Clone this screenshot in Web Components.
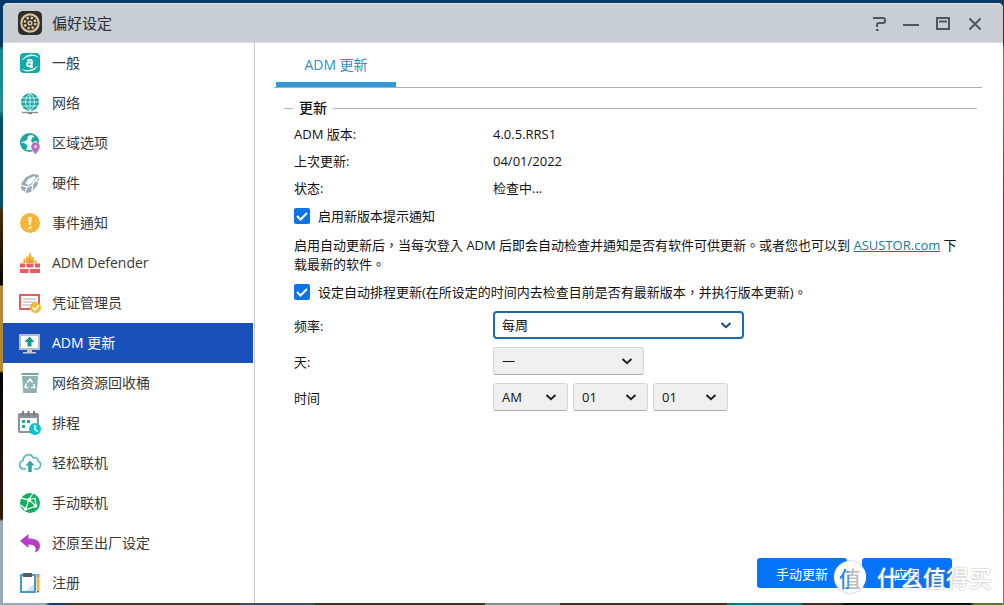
<!DOCTYPE html>
<html lang="zh-Hant">
<head>
<meta charset="utf-8">
<title>偏好设定</title>
<style>
html, body { height: 100%; }
body { margin: 0; font-family: "Open Sans", "Noto Sans CJK TC", sans-serif; font-size: 13px; color: #111; overflow: hidden; }
</style>
</head>
<body>
<desktop-screen>
  <app-window heading="偏好设定">
    <nav-list slot="side">
      <nav-item icon="general">一般</nav-item>
      <nav-item icon="network">网络</nav-item>
      <nav-item icon="region">区域选项</nav-item>
      <nav-item icon="hardware">硬件</nav-item>
      <nav-item icon="notice">事件通知</nav-item>
      <nav-item icon="defender">ADM Defender</nav-item>
      <nav-item icon="cert">凭证管理员</nav-item>
      <nav-item icon="update" selected>ADM 更新</nav-item>
      <nav-item icon="trash">网络资源回收桶</nav-item>
      <nav-item icon="schedule">排程</nav-item>
      <nav-item icon="cloud">轻松联机</nav-item>
      <nav-item icon="manual">手动联机</nav-item>
      <nav-item icon="reset">还原至出厂设定</nav-item>
      <nav-item icon="register">注册</nav-item>
    </nav-list>
    <update-panel></update-panel>
  </app-window>
  <brand-mark slot="overlay"></brand-mark>
</desktop-screen>

<script>
const define = (name, html, setup) => {
  const t = document.createElement('template');
  t.innerHTML = html;
  customElements.define(name, class extends HTMLElement {
    constructor() {
      super();
      this.attachShadow({ mode: 'open' }).append(t.content.cloneNode(true));
    }
    connectedCallback() { if (setup) setup(this, this.shadowRoot); }
  });
};

const svg = (body, size = 24) => `<svg width="${size}" height="${size}" viewBox="0 0 24 24" fill="none" aria-hidden="true">${body}</svg>`;

const icons = {
  general: `<rect x="2" y="2" width="20" height="20" rx="4" fill="#14aaa9"/>
    <path d="M4 9.500C7 3 16 1.500 21 6.500C16 3.800 9 4.500 4 9.500zM20 14.500C17 21 8 22.500 3 17.500C8 20.200 15 19.500 20 14.500z" fill="#fff"/>
    <ellipse cx="11.300" cy="13.300" rx="2.300" ry="2" stroke="#fff" stroke-width="1.700"/><path d="M9 9.700q5.500-2 5 1.300l-.8 5h1.800" stroke="#fff" stroke-width="1.800"/>`,
  network: `<circle cx="12" cy="11" r="9" fill="#1aa5a3"/><path d="M4 7h16M3 11h18M4 15h16M12 2v18M12 2c-6 5-6 13 0 18M12 2c6 5 6 13 0 18" stroke="#c8f3ee" stroke-width="1"/><path d="M4 21.500h16" stroke="#8b8f95" stroke-width="1.500"/><path d="M10 22.500h4" stroke="#666b70"/>`,
  region: `<circle cx="11.500" cy="11.500" r="8.700" fill="#f2fffd" stroke="#1aa79d" stroke-width="1.800"/><path d="M3 12l3 0 3 2 0 3-2 2-3-3zM4 7l5-4 3 0-1 2-2 1 1 2-3 2-3 1zM15 3l5 4 1 4-4-1-2 2-2-2 1-3 2-1z" fill="#1aa79d"/><path d="M17.500 24c-1.500-3-4.500-5-4.500-8.500a4.500 4.500 0 0 1 9 0c0 3.500-3 5.500-4.500 8.500z" fill="#b46dc2" stroke="#fff" stroke-width=".5"/><circle cx="17.500" cy="15.500" r="1.600" fill="#e7c9ec"/>`,
  hardware: `<path d="M3 13l5-7 7-3 5.500 1 .5 4-2 7-6 6-5 1-5-4z" fill="#98a9b9"/><path d="M7.500 12.500l2.500-4.500 6.500-3 1.500 2-3.500 4.500-4 2.500z" fill="#fff"/><path d="M2.500 14l6 2 5.500-2 6.500-8M9 16l-2 5.500M14.500 14l-.5 6.500M18.500 9.500l2 2" stroke="#fff" stroke-width="1.200"/>`,
  notice: `<circle cx="12" cy="12" r="10" fill="#f5b638"/><path d="M10.300 6h3.400l-.6 8h-2.200z" fill="#fff4d8"/><circle cx="12" cy="16.800" r="1.500" fill="#fff4d8"/>`,
  defender: `<path d="M5 12l1-5 2 2 0-4 2 1 2-5 2 5 2 0 0 4 2-1 1 3z" fill="#f4b43f"/><path d="M9 12l3-5 3 5z" fill="#ee9a3c"/><path d="M2 12.500h5v4H2zM8.500 12.500h7v4h-7zM17 12.500h5v4h-5zM2 18h8.500v4H2zM12 18h10v4H12z" fill="#ea5a5e"/>`,
  cert: `<rect x="2" y="4" width="19" height="14" fill="#fff" stroke="#e05f5e" stroke-width="2"/><path d="M5 8h13M5 11h13M5 14h9" stroke="#c9c4d4" stroke-width="1.400"/><circle cx="17.500" cy="16.500" r="5.500" fill="#f2bb36"/><path d="M14.500 16.500l2.300 2.500 4-4.500" stroke="#fff" stroke-width="1.700"/>`,
  update: `<path d="M1 3h21v16H1z" fill="#b9bcc4"/><path d="M3 5h17v12H3z" fill="#fff"/><path d="M11.500 5.500l5 5.500h-3v4.500h-4V11h-3z" fill="#159b8c"/><path d="M9 19h5v2h4v1.500H5V21h4z" fill="#c6c9cd"/>`,
  trash: `<path d="M3.500 2h17v2h-17z" fill="#77a5a2"/><path d="M4 5h16l-1.200 17H5.200z" fill="#8fb3b2"/><path d="M9.500 11.500L12 7.800l2.500 3.700M15.500 13l1.500 3.500h-4M8.500 12.500L7 16.500h3.500" stroke="#fff" stroke-width="1.500" stroke-linejoin="round"/>`,
  schedule: `<rect x="1" y="3" width="19" height="18" rx="1" fill="#fff" stroke="#8d9096" stroke-width="2"/><path d="M0 3h21v4H0z" fill="#8d9096"/><path d="M5 0v5M10.500 0v5M16 0v5" stroke="#787d84" stroke-width="2"/><path d="M4 9h3v3H4zM9 9h3v3H9zM4 14h3v3H4z" fill="#27a69e"/><circle cx="17" cy="18" r="6" fill="#12bfd3"/><path d="M17 14v4.500l3 2" stroke="#fff" stroke-width="1.500"/>`,
  cloud: `<path d="M8 18H5.500a4.300 4.300 0 0 1-.3-8.500C5 4 12.500 1 15.500 7c4-1 5 2 4.500 3 4 1.500 3 8-1.500 8H16" stroke="#58b5b7" stroke-width="1.600"/><path d="M12 9.500l4.500 5h-2.700V21h-3.600v-6.500H7.500z" fill="#2fa7a9"/>`,
  manual: `<circle cx="12" cy="12" r="10" fill="#12ad5d"/><path d="M3 7l8 2 7 6M11 9L7 19M11 9l4-7M17 7l-6 2M17 7l1 8-11 4M3 14l5 5" stroke="#eafff2" stroke-width="1.300"/><circle cx="11" cy="9" r="2" fill="#fff"/><circle cx="17.500" cy="15" r="1.800" fill="#fff"/><circle cx="7.500" cy="18" r="1.800" fill="#fff"/>`,
  reset: `<path d="M2 10L10.500 3v4.500c7 0 11.500 2 11.500 7.500 0 3-2 5.500-5 6.500 2.500-5-.5-8-6.500-8V17z" fill="#ba3ec8"/><path d="M16 10c5 2 5 8 1 11.500 2-4 1-6-1-7.500z" fill="#8e4a9a" opacity=".5"/>`,
  register: `<rect x="3" y="4" width="14" height="17" fill="#fff" stroke="#3f9bd0" stroke-width="2"/><path d="M5 2h9v4H5z" fill="#4e6063"/><path d="M16 13v7h-8z" fill="#cfe3ef"/><path d="M18.500 6h3v13L20 22l-1.500-3z" fill="#f1b740"/><path d="M18.500 3h3v3h-3z" fill="#c9898d"/><path d="M19 20l1 2 1-2z" fill="#333"/>`
};

define('desktop-screen', `
<style>
:host { display: flex; box-sizing: border-box; min-height: 100vh; height: 100%; padding: 3px 1px 2px 3px; position: relative;
  background:
    linear-gradient(#063a66, #063a66) top / 100% 3px no-repeat,
    linear-gradient(#0a3c66 46px, #577d3e 46px, #8a7f8c 70px, #4a7d2c 130px, #175a5c 200px, #175a5c 270px, #355c33 60%, #7d8f2c) right / 2px 100% no-repeat,
    linear-gradient(90deg, #9aa8b8 45px, #1d3a63 50px 62px, #4a3222 72px 240px, #4a4a66 240px 315px, #45301f 315px 485px, #8b8b8b 485px 560px, #432e20 560px 727px, #08757a 727px 802px, #40301e 802px 840px, #0d0c08 845px 970px, #5f7234 974px) bottom / 100% 2px no-repeat,
    linear-gradient(#063a66 46px, #1b8590 50px, #2a8b95 110px, #085064 118px, #05506b 205px, #4a2b08 212px, #0a0500 285px, #b28a38 286px, #b28a38 371px, #050302 373px, #35190d 519px, #9aa8b8 521px); }
::slotted(app-window) { flex: 1; min-width: 0; }
</style>
<slot></slot><slot name="overlay"></slot>`);

define('app-window', `
<style>
:host { display: flex; flex-direction: column; background: #fff; border-radius: 5px 5px 0 0; overflow: hidden; }
header { display: flex; align-items: center; height: 38px; padding: 0 18px 0 14px; border-top: 1px solid #dce4ea; border-bottom: 1px solid #dcdde2; background: #c8ced3; color: #2b3036; }
h1 { flex: 1; margin: 0 0 0 9px; font-size: 15px; line-height: 20px; font-weight: 400; }
.controls { display: flex; gap: 12px; }
button { display: flex; border: 0; padding: 0; background: none; color: #50565b; }
.body { flex: 1; display: flex; min-height: 0; }
main { flex: 1; display: flex; min-width: 0; }
::slotted(update-panel) { flex: 1; }
</style>
<header>
  <svg width="26" height="26" viewBox="0 0 26 26" fill="none" aria-hidden="true"><rect x="1" y="1" width="24" height="24" rx="5" fill="#302d2b"/><circle cx="13" cy="13" r="8.700" stroke="#d9c49b" stroke-width="2.200"/><circle cx="13" cy="13" r="5.300" stroke="#d9c49b" stroke-width="2.600" stroke-dasharray="2.400 1.760"/><circle cx="13" cy="13" r="2.600" fill="#d9c49b"/><circle cx="13" cy="13" r="1" fill="#302d2b"/></svg>
  <h1></h1>
  <div class="controls">
    <button aria-label="help"><svg width="20" height="20" viewBox="0 0 20 20" fill="none" stroke="currentColor" stroke-width="2"><path d="M4 5h10q2 0 2 2v1q0 2-2 2H10q-2 0-2 2v2M7 17h2.500"/></svg></button>
    <button aria-label="minimize"><svg width="20" height="20" viewBox="0 0 20 20" stroke="currentColor" stroke-width="2"><path d="M2 12h16"/></svg></button>
    <button aria-label="maximize"><svg width="20" height="20" viewBox="0 0 20 20" fill="none" stroke="currentColor" stroke-width="2"><path d="M4 5h12v11H4zM6 8.500h8"/></svg></button>
    <button aria-label="close"><svg width="20" height="20" viewBox="0 0 20 20" stroke="currentColor" stroke-width="2"><path d="M4.500 5.500l11 11M15.500 5.500l-11 11"/></svg></button>
  </div>
</header>
<div class="body"><slot name="side"></slot><main><slot></slot></main></div>`,
(el, root) => { root.querySelector('h1').textContent = el.getAttribute('heading'); });

define('nav-list', `
<style>
:host { display: block; flex: none; width: 250px; padding-right: 1px; border-right: 1px solid #c9cacf; overflow: hidden; }
nav { display: flex; flex-direction: column; }
</style>
<nav><slot></slot></nav>`);

define('nav-item', `
<style>
:host { display: block; color: #383838; }
:host([selected]) { background: #1a50ba; color: #fff; }
a { display: flex; align-items: center; gap: 10px; height: 40px; padding-left: 15px; font-size: 14px; line-height: 20px; color: inherit; text-decoration: none; }
.pic { display: flex; }
svg { flex: none; overflow: visible; }
</style>
<a href="#"><span class="pic"></span><span><slot></slot></span></a>`,
(el, root) => {
  root.querySelector('.pic').innerHTML = svg(icons[el.getAttribute('icon')]);
  if (el.hasAttribute('selected')) root.querySelector('a').setAttribute('aria-current', 'page');
});

define('check-row', `
<style>
:host { display: block; }
label { display: flex; align-items: center; gap: 8px; line-height: 20px; }
input { appearance: none; flex: none; width: 16px; height: 16px; margin: 0; border-radius: 2px; background: #fff; border: 1px solid #999; }
input:checked { border: 0; background: #0d74e7 url("data:image/svg+xml,%3Csvg xmlns='http://www.w3.org/2000/svg' viewBox='0 0 16 16'%3E%3Cpath d='M3 8l3.500 3.500L13 5' fill='none' stroke='white' stroke-width='2'/%3E%3C/svg%3E"); }
</style>
<label><input type="checkbox" checked><span><slot></slot></span></label>`);

define('update-panel', `
<style>
:host { display: flex; flex-direction: column; min-width: 0; padding: 0 21px 15px 19px; }
.tabs { display: flex; height: 44px; padding-left: 2px; border-bottom: 1px solid #adadad; }
.tabs button { width: 120px; border: 0; border-bottom: 5px solid #3498d8; padding: 4px 0 0; background: none; color: #2b91bd; font: inherit; font-size: 14px; line-height: 20px; }
fieldset { flex: 1; min-width: 0; margin: 10px 5px 0 10px; border: 0; border-top: 1px solid #b4b4b4; padding: 0 10px; }
legend { margin-left: -1px; padding: 0 6px; font-size: 14px; line-height: 20px; font-weight: 500; }
dl { display: grid; grid-template-columns: 199px 1fr; line-height: 27px; margin: 3px 0 0; }
dd { margin: 0; }
check-row { margin-top: 4px; }
p { margin: 10px 0 8px; line-height: 19px; }
a { color: #147ba0; }
.form { display: grid; grid-template-columns: 199px 1fr; row-gap: 8px; align-items: center; margin-top: 9px; }
.group { display: flex; gap: 5px; }
select { appearance: none; box-sizing: border-box; height: 28px; border: 1px solid #d6d6d6; border-bottom-color: #ababab; border-radius: 3px; padding: 0 8px; font: inherit; color: #111;
  background: #efefef url("data:image/svg+xml,%3Csvg xmlns='http://www.w3.org/2000/svg' viewBox='0 0 12 12'%3E%3Cpath d='M1.500 4L6 8.200 10.500 4' fill='none' stroke='%23222' stroke-width='2'/%3E%3C/svg%3E") right 10px center / 12px 12px no-repeat; }
.wide { width: 251px; border: 2px solid #1b6cad; border-radius: 4px; padding: 0 7px; background-color: #fff;
  background-image: url("data:image/svg+xml,%3Csvg xmlns='http://www.w3.org/2000/svg' viewBox='0 0 12 12'%3E%3Cpath d='M1.500 4L6 8.200 10.500 4' fill='none' stroke='%231a4a6c' stroke-width='2'/%3E%3C/svg%3E"); }
.mid { width: 151px; }
.small { width: 75px; }
footer { display: flex; justify-content: flex-end; gap: 15px; padding-right: 30px; }
footer button { width: 90px; height: 30px; border: 0; border-radius: 3px; background: #0474fa; color: #fff; font: inherit; padding: 0; }
</style>
<div class="tabs" role="tablist"><button role="tab" aria-selected="true">ADM 更新</button></div>
<fieldset>
  <legend>更新</legend>
  <dl>
    <dt>ADM 版本:</dt><dd>4.0.5.RRS1</dd>
    <dt>上次更新:</dt><dd>04/01/2022</dd>
    <dt>状态:</dt><dd>检查中...</dd>
  </dl>
  <check-row>启用新版本提示通知</check-row>
  <p>启用自动更新后，当每次登入 ADM 后即会自动检查并通知是否有软件可供更新。或者您也可以到 <a href="#">ASUSTOR.com</a> 下载最新的软件。</p>
  <check-row>设定自动排程更新(在所设定的时间内去检查目前是否有最新版本，并执行版本更新)。</check-row>
  <div class="form">
    <label for="freq">频率:</label><div class="group"><select id="freq" class="wide"><option>每周</option></select></div>
    <label for="day">天:</label><div class="group"><select id="day" class="mid"><option>一</option></select></div>
    <label for="ampm">时间</label><div class="group">
      <select id="ampm" class="small"><option>AM</option></select>
      <select class="small" aria-label="时"><option>01</option></select>
      <select class="small" aria-label="分"><option>01</option></select>
    </div>
  </div>
</fieldset>
<footer><button>手动更新</button><button>应用</button></footer>`);

define('brand-mark', `
<style>
:host { position: absolute; right: 12px; bottom: 12px; display: flex; align-items: center; gap: 11px; pointer-events: none; color: #fff; font-family: "Noto Sans CJK SC", sans-serif; }
.disc { display: flex; align-items: center; justify-content: center; width: 32px; height: 32px; border-radius: 50%; background: #fff; box-shadow: 0 0 2px #999; font-size: 22px; line-height: 32px; font-weight: 500; }
.disc span { background: linear-gradient(90deg, #2b83dc 40%, #b9bcc0 50%); background-clip: text; -webkit-background-clip: text; color: transparent; }
.name { font-size: 23px; line-height: 32px; font-weight: 500; text-shadow: 0 0 2px #999; }
</style>
<span class="disc"><span>值</span></span><span class="name">什么值得买</span>`);
</script>
</body>
</html>
